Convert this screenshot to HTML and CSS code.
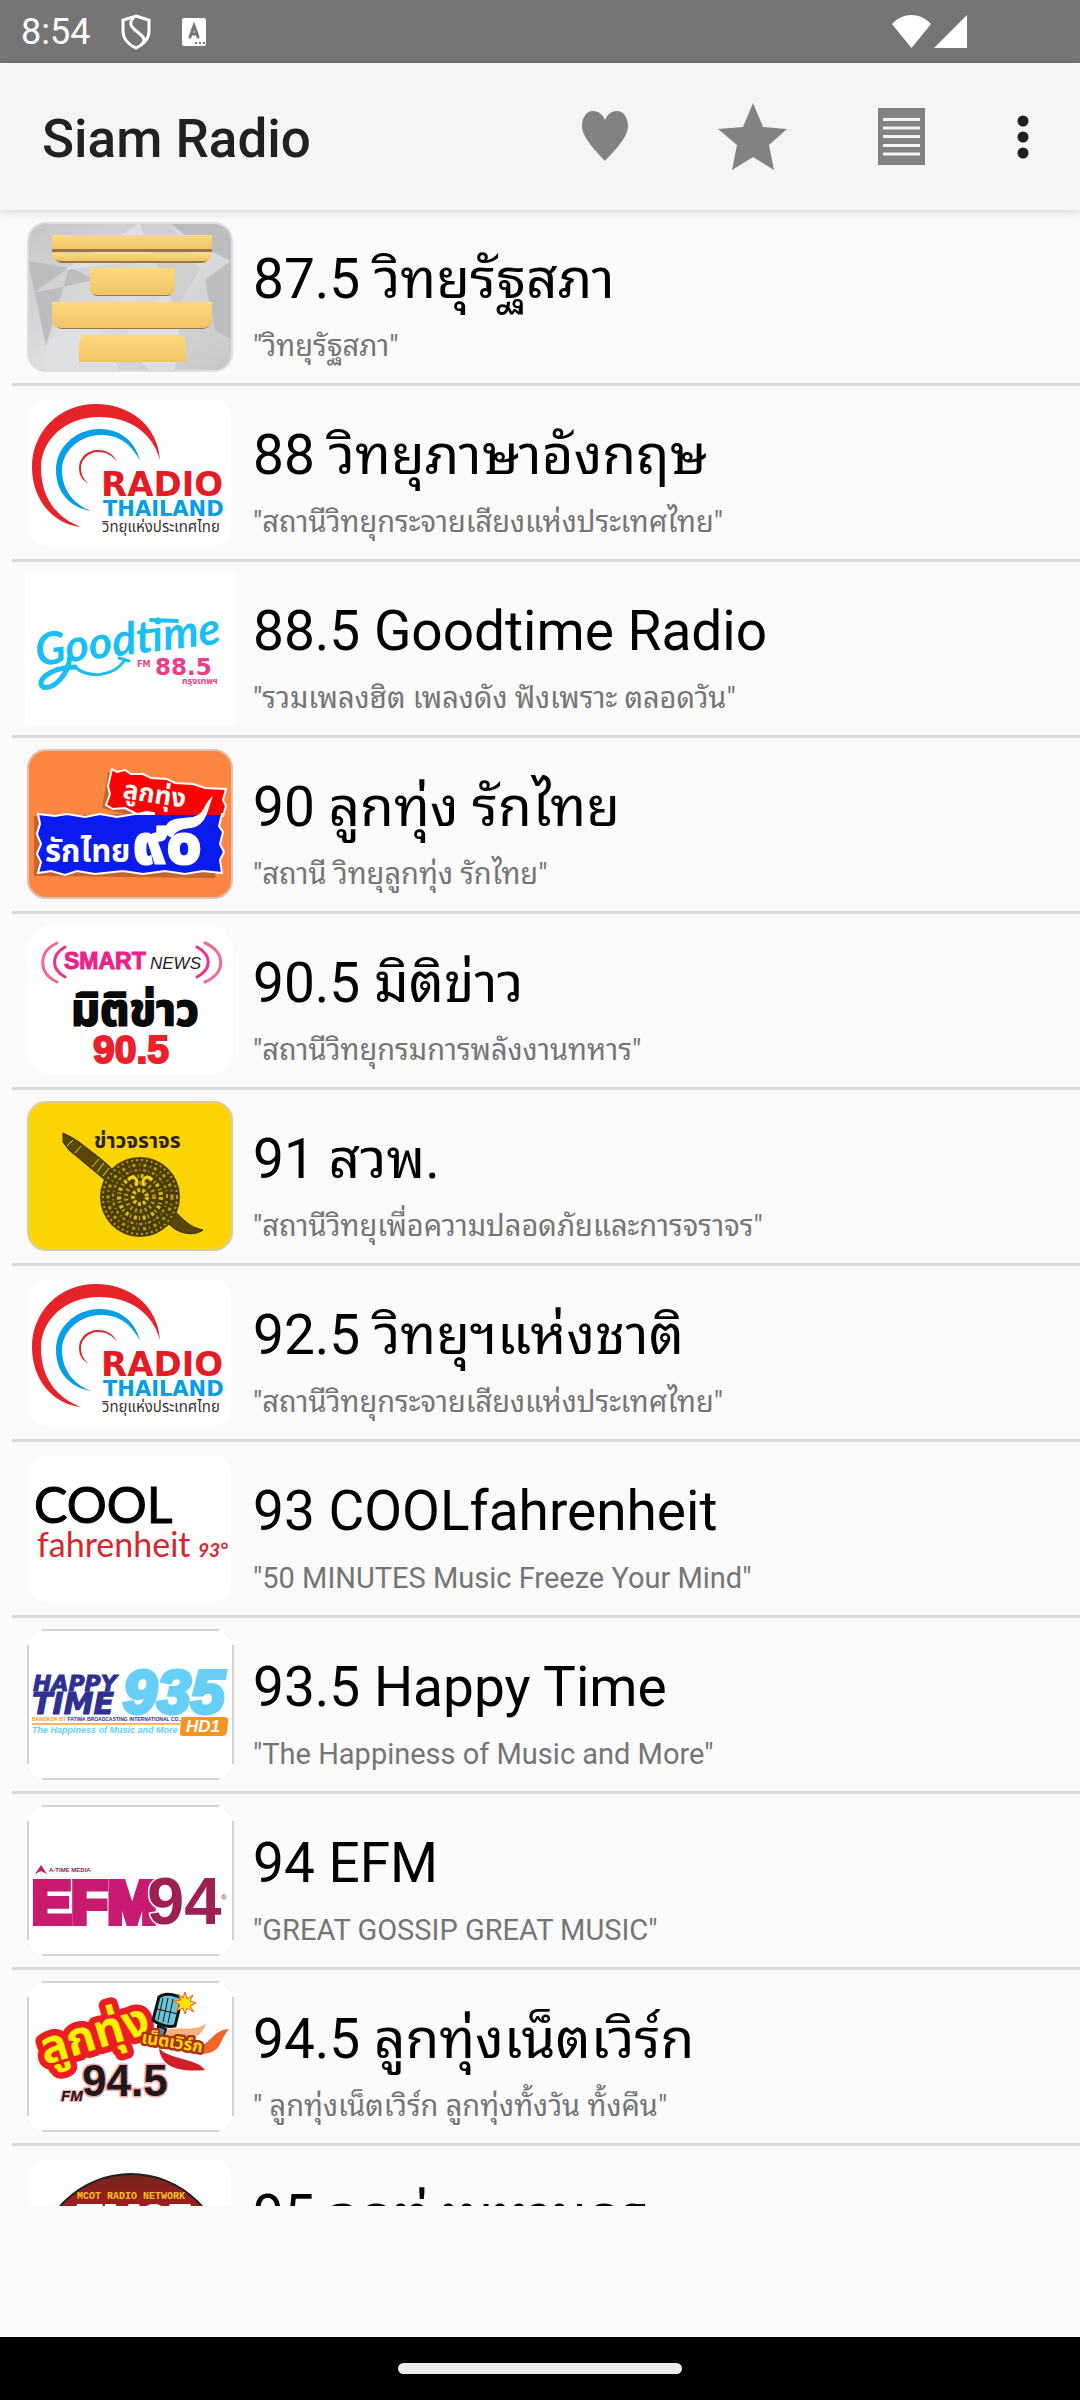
FILE: index.html
```html
<!DOCTYPE html>
<html lang="th">
<head>
  <meta charset="utf-8">
  <title>Siam Radio</title>
  <meta name="viewport" content="width=device-width, initial-scale=1.0">
  <link rel="stylesheet" href="styles.css">
</head>
<body>
  <div class="status-bar">
    <span class="clock">8:54</span>
    <svg class="status-icon" width="30" height="36" viewBox="0 0 30 36" fill="none" stroke="#fff" stroke-width="3">
      <path d="M15 2 L28 6 V17 C28 25 22 31 15 34 C8 31 2 25 2 17 V6 Z"/>
      <path d="M13 3 C8 8 9 12 14 16 L20 21 C25 25 23 28 20 31"/>
    </svg>
    <svg class="status-icon" width="24" height="28" viewBox="0 0 24 28">
      <rect width="24" height="28" rx="2" fill="#fff"/>
      <path d="M8 19 L12 8 L16 19 M9 16 H15" fill="none" stroke="#757575" stroke-width="3" stroke-linecap="round"/>
      <path d="M13 24h2v2h-2z M17 24h2v2h-2z M21 24h2v2h-2z" fill="#757575"/>
    </svg>
    <svg class="signal" width="76" height="34" viewBox="0 0 76 34" fill="#fff">
      <path d="M0 9 C11 -3 28 -3 39 9 L19.500 33 Z"/>
      <path d="M75 0 V33 H42 Z"/>
    </svg>
  </div>

  <header class="app-bar">
    <h1>Siam Radio</h1>
    <button class="action" aria-label="Favorites">
      <svg width="96" height="96" viewBox="0 0 96 96">
        <path fill="#828282" d="M48 72 C40 63 25 49 25 37 C25 28 30 22 36 22 C42 22 46 26 48 31 C50 26 54 22 60 22 C66 22 71 28 71 37 C71 49 56 63 48 72 Z"/>
      </svg>
    </button>
    <button class="action" aria-label="Top stations">
      <svg width="96" height="96" viewBox="0 0 96 96">
        <path fill="#828282" d="M48 14 L58 38 L82 40 L64 56 L69 81 L48 68 L27 81 L32 56 L13 40 L38 38 Z"/>
      </svg>
    </button>
    <button class="action" aria-label="Station list">
      <svg width="96" height="96" viewBox="0 0 96 96">
        <rect x="25" y="19" width="47" height="57" fill="#828282"/>
        <path d="M30 30.500H67 M30 39H67 M30 47.500H67 M30 56.500H67 M30 65H67" stroke="#f5f5f5" stroke-width="3"/>
      </svg>
    </button>
    <button class="action more" aria-label="More options">
      <svg width="24" height="48" viewBox="0 0 24 48" fill="#212121">
        <circle cx="12" cy="8" r="5.500"/>
        <circle cx="12" cy="24" r="5.500"/>
        <circle cx="12" cy="40" r="5.500"/>
      </svg>
    </button>
  </header>

  <main class="content">
    <ul class="stations">
      <li>
        <a class="station" href="#875">
          <svg class="logo" viewBox="0 0 210 153">
            <defs>
              <linearGradient id="steel" x1="0" y1="0" x2="1" y2="1">
                <stop offset="0" stop-color="#c3c4c6"/>
                <stop offset=".5" stop-color="#dcdddf"/>
                <stop offset="1" stop-color="#c4c5c7"/>
              </linearGradient>
              <linearGradient id="gold" x1="0" y1="0" x2="0" y2="1">
                <stop offset="0" stop-color="#ffda7b"/>
                <stop offset="1" stop-color="#efc465"/>
              </linearGradient>
              <clipPath id="plate"><rect x="3" y="3" width="204" height="148" rx="18"/></clipPath>
            </defs>
            <g clip-path="url(#plate)">
              <rect width="210" height="153" fill="url(#steel)"/>
              <path d="M3 41 L44 48 L21 126 Z M8 73 L70 60 L45 47 Z M145 3 H207 V42 L166 20 Z M180 60 L207 40 V120 L190 110 Z" fill="#bcbdbf"/>
              <path d="M40 50 L115 3 L125 40 Z M95 120 L160 50 L150 151 H125 Z M21 126 L60 80 L95 151 H20 Z" fill="#dedfe1"/>
              <path d="M115 3 L145 3 L175 50 L150 90 Z" fill="#cecfd1"/>
            </g>
            <rect x="3" y="3" width="204" height="148" rx="18" fill="none" stroke="#dedede" stroke-width="2"/>
            <g fill="#a07440">
              <rect x="27" y="29" width="160" height="3"/>
              <path d="M29 36 H185 Q182 43 177 43 H37 Q31 43 29 36Z"/>
              <path d="M66 66 H149 Q148 76 142 76 H72 Q66 76 66 66Z"/>
              <path d="M28 98 H187 Q186 109 178 109 H37 Q28 109 28 98Z"/>
            </g>
            <g fill="url(#gold)">
              <rect x="27" y="15" width="160" height="14"/>
              <path d="M27 33 H187 Q187 41 179 41 H36 Q27 41 27 33Z"/>
              <path d="M65 48 H150 V67 Q150 75 143 75 H72 Q65 75 65 67Z"/>
              <path d="M27 82 H187 V99 Q187 108 178 108 H36 Q27 108 27 99Z"/>
              <path d="M54 142 V124 Q54 115 63 115 H152 Q161 115 161 124 V142Z"/>
            </g>
          </svg>
          <span class="info">
            <span class="name">87.5 วิทยุรัฐสภา</span>
            <span class="desc">"วิทยุรัฐสภา"</span>
          </span>
        </a>
      </li>
      <li>
        <a class="station" href="#88">
          <svg class="logo" viewBox="0 0 210 153">
            <rect x="4" y="4" width="202" height="145" rx="15" fill="#fff"/>
            <path fill="#e52329" d="M135 64 C133 30 105 8 71 8 C34 8 7 36 7 71 C7 104 28 128 56 131 C32 122 16 102 16 72 C16 44 40 21 74 21 C106 21 128 38 135 64Z"/>
            <path fill="#009fe8" d="M115 65 C110 44 94 33 75 33 C50 33 31 52 31 74 C31 98 47 112 66 115 C50 109 37 95 37 74 C37 55 55 39 76 39 C95 39 107 49 115 65Z"/>
            <path fill="#e52329" d="M92 66 C88 57 81 54 73 54 C62 54 54 62 54 72 C54 80 58 85 64 88 C59 84 56 79 56 72 C56 63 64 56 73 56 C81 56 87 59 92 66Z"/>
            <text class="wide bold" x="76" y="100" font-size="34" fill="#e31b23">RADIO</text>
            <text class="wide bold" x="78" y="120" font-size="21" fill="#009fe8">THAILAND</text>
            <text class="thai" x="77" y="136" font-size="15" fill="#3a2f30">วิทยุแห่งประเทศไทย</text>
          </svg>
          <span class="info">
            <span class="name">88 วิทยุภาษาอังกฤษ</span>
            <span class="desc">"สถานีวิทยุกระจายเสียงแห่งประเทศไทย"</span>
          </span>
        </a>
      </li>
      <li>
        <a class="station" href="#885">
          <svg class="logo" viewBox="0 0 210 153">
            <rect width="210" height="153" fill="#fff"/>
            <text class="script" x="12" y="94" font-size="45" fill="#19bff3" transform="rotate(-7 12 94)">Goodtime</text>
            <g fill="none" stroke="#19bff3" stroke-linecap="round">
              <path d="M50 95 C64 107 88 105 100 88" stroke-width="3"/>
              <path d="M94 86 L104 89" stroke-width="3"/>
              <path d="M45 84 C44 102 29 118 18 115 C11 110 22 96 50 95" stroke-width="5"/>
              <path d="M126 48 L152 49" stroke-width="4"/>
            </g>
            <text class="wide bold" x="112" y="95" font-size="8" fill="#ee3d86">FM</text>
            <text class="wide bold" x="130" y="103" font-size="23" fill="#ee3d86">88.5</text>
            <text class="thai bold" x="157" y="112" font-size="9" fill="#ee3d86">กรุงเทพฯ</text>
          </svg>
          <span class="info">
            <span class="name">88.5 Goodtime Radio</span>
            <span class="desc">"รวมเพลงฮิต เพลงดัง ฟังเพราะ ตลอดวัน"</span>
          </span>
        </a>
      </li>
      <li>
        <a class="station" href="#90">
          <svg class="logo" viewBox="0 0 210 153">
            <rect x="3" y="2" width="204" height="148" rx="18" fill="#ff8640" stroke="#d8c3b6" stroke-width="2"/>
            <path d="M83 24 L77 60 L100 66 L9 68 V128 L190 130 L197 80Z" fill="#7d3d18" opacity=".45"/>
            <path fill="#f00" stroke="#fff" stroke-width="2" d="M87 21 L92 24 L100 22 L106 26 L118 26 L126 30 L142 31 L150 35 L168 36 L180 40 L201 41 L198 52 L201 58 L198 68 L140 67 L122 64 L112 66 L100 60 L88 61 L81 57 L85 46 L83 38 Z"/>
            <path fill="#0a1bf0" stroke="#fff" stroke-width="2" d="M13 66 L30 68 L42 66 L60 69 L75 66 L92 69 L110 66 H197 L194 78 L198 84 L195 96 L199 104 L195 112 L197 125 L178 123 L160 126 L140 123 L118 126 L98 123 L70 126 L52 123 L40 127 L26 123 L13 125 L16 114 L12 106 L16 96 L12 86 L15 76 Z"/>
            <path fill="#f00" d="M130 62 H196 V67 H130Z"/>
            <path fill="#fff" d="M140 86 C139 68 155 71 168 69 C180 66 178 56 188 48 C183 60 182 78 166 80 C154 81 150 84 147 90Z"/>
            <text class="thai bold" x="97" y="50" font-size="26" fill="#fff" transform="rotate(9 97 50)">ลูกทุ่ง</text>
            <text class="thai bold" x="20" y="114" font-size="31" fill="#fff">รักไทย</text>
            <text class="thai bold" x="108" y="115" font-size="62" fill="#fff" stroke="#fff" stroke-width="3">๙๐</text>
          </svg>
          <span class="info">
            <span class="name">90 ลูกทุ่ง รักไทย</span>
            <span class="desc">"สถานี วิทยุลูกทุ่ง รักไทย"</span>
          </span>
        </a>
      </li>
      <li>
        <a class="station" href="#905">
          <svg class="logo" viewBox="0 0 210 153">
            <rect x="2" y="2" width="206" height="149" rx="25" fill="#fff"/>
            <g fill="none" stroke-width="3" stroke-linecap="round">
              <path d="M32 19 C13 28 13 49 32 58 M180 19 C201 28 201 49 180 58" stroke="#ee6a92"/>
              <path d="M40 23 C26 31 26 45 40 53 M172 23 C187 31 187 45 172 53" stroke="#ec2f92"/>
            </g>
            <text class="sans bold" x="39" y="45" font-size="23" fill="#ec1f8c" stroke="#ec1f8c">SMART</text>
            <text class="sans italic" x="125" y="45" font-size="17" fill="#222">NEWS</text>
            <text class="thai bold" x="46" y="101" font-size="45" fill="#0a0a0a" stroke="#0a0a0a" stroke-width="2">มิติข่าว</text>
            <text class="sans bold" x="68" y="139" font-size="39" fill="#ea202d" stroke="#ea202d" stroke-width="2">90.5</text>
          </svg>
          <span class="info">
            <span class="name">90.5 มิติข่าว</span>
            <span class="desc">"สถานีวิทยุกรมการพลังงานทหาร"</span>
          </span>
        </a>
      </li>
      <li>
        <a class="station" href="#91">
          <svg class="logo" viewBox="0 0 210 153">
            <rect x="3" y="2" width="204" height="148" rx="18" fill="#fcd404" stroke="#d6cfa6" stroke-width="2"/>
            <text class="thai bold" x="69" y="48" font-size="21" fill="#2b2300">ข่าวจราจร</text>
            <path fill="#574806" stroke="#2f2600" d="M38 33 L46 37 L54 42 L76 59 L84 66 L90 73 L80 80 L68 70 L44 50 L38 42Z"/>
            <path d="M48 40 L42 46 M56 46 L50 53 M74 59 L67 67 M79 63 L72 72 M84 68 L78 76" stroke="#fcd404"/>
            <path fill="#574806" stroke="#2f2600" d="M150 112 C158 118 163 127 178 130 C170 136 154 135 144 124Z"/>
            <circle cx="115" cy="97" r="40" fill="#4c3e02"/>
            <g fill="none" stroke="#b99c0c">
              <circle cx="115" cy="97" r="37" stroke-width="2" stroke-dasharray="2 3"/>
              <circle cx="115" cy="97" r="32" stroke-width="3" stroke-dasharray="3 4 1 3"/>
              <circle cx="115" cy="97" r="27" stroke-width="2" stroke-dasharray="1 3 3 2"/>
              <circle cx="115" cy="97" r="21" stroke="#dfbc08" stroke-width="4" stroke-dasharray="3 3 1 2"/>
              <circle cx="115" cy="97" r="14" stroke-width="4" stroke-dasharray="2 3"/>
              <circle cx="115" cy="97" r="7" stroke="#dfbc08" stroke-width="4" stroke-dasharray="3 2"/>
              <path d="M103 80 C108 74 114 79 111 86 M127 80 C122 74 116 79 119 86" stroke="#fcd404" stroke-width="3"/>
            </g>
          </svg>
          <span class="info">
            <span class="name">91 สวพ.</span>
            <span class="desc">"สถานีวิทยุเพื่อความปลอดภัยและการจราจร"</span>
          </span>
        </a>
      </li>
      <li>
        <a class="station" href="#925">
          <svg class="logo" viewBox="0 0 210 153">
            <rect x="4" y="4" width="202" height="145" rx="15" fill="#fff"/>
            <path fill="#e52329" d="M135 64 C133 30 105 8 71 8 C34 8 7 36 7 71 C7 104 28 128 56 131 C32 122 16 102 16 72 C16 44 40 21 74 21 C106 21 128 38 135 64Z"/>
            <path fill="#009fe8" d="M115 65 C110 44 94 33 75 33 C50 33 31 52 31 74 C31 98 47 112 66 115 C50 109 37 95 37 74 C37 55 55 39 76 39 C95 39 107 49 115 65Z"/>
            <path fill="#e52329" d="M92 66 C88 57 81 54 73 54 C62 54 54 62 54 72 C54 80 58 85 64 88 C59 84 56 79 56 72 C56 63 64 56 73 56 C81 56 87 59 92 66Z"/>
            <text class="wide bold" x="76" y="100" font-size="34" fill="#e31b23">RADIO</text>
            <text class="wide bold" x="78" y="120" font-size="21" fill="#009fe8">THAILAND</text>
            <text class="thai" x="77" y="136" font-size="15" fill="#3a2f30">วิทยุแห่งประเทศไทย</text>
          </svg>
          <span class="info">
            <span class="name">92.5 วิทยุฯแห่งชาติ</span>
            <span class="desc">"สถานีวิทยุกระจายเสียงแห่งประเทศไทย"</span>
          </span>
        </a>
      </li>
      <li>
        <a class="station" href="#93">
          <svg class="logo" viewBox="0 0 210 153">
            <rect x="4" y="4" width="202" height="145" rx="15" fill="#fff"/>
            <text class="lato" x="9" y="71" font-size="50" fill="#000" stroke="#000">COOL</text>
            <text class="lato" x="12" y="105" font-size="34" fill="#d7262c">fahrenheit</text>
            <text class="lato italic bold" x="173" y="105" font-size="19" fill="#d7262c">93°</text>
          </svg>
          <span class="info">
            <span class="name">93 COOLfahrenheit</span>
            <span class="desc">"50 MINUTES Music Freeze Your Mind"</span>
          </span>
        </a>
      </li>
      <li>
        <a class="station" href="#935">
          <svg class="logo" viewBox="0 0 210 153">
            <rect x="3" y="3" width="204" height="148" rx="18" fill="#fff"/>
            <path d="M17 2H194 M17 151H194 M3 17V136 M208 17V136" stroke="#d4d4d4" stroke-width="2"/>
            <text class="sans bold italic" x="98" y="85" font-size="61" fill="#67cff7" stroke="#67cff7" stroke-width="4">935</text>
            <text class="wide bold italic" x="8" y="63" font-size="22" fill="#2e3192" stroke="#2e3192">HAPPY</text>
            <text class="wide bold italic" x="7" y="86" font-size="30" fill="#2e3192" stroke="#2e3192">TIME</text>
            <text class="sans bold" x="7" y="93" font-size="5" fill="#2e3192"><tspan fill="#f7941e">BANGKOK BY</tspan> FATIMA BROADCASTING INTERNATIONAL CO.,LTD.</text>
            <path d="M7 96H155" stroke="#f7b565" stroke-width="2"/>
            <text class="sans bold italic" x="7" y="105" font-size="9" fill="#67cff7">The Happiness of Music and More</text>
            <path d="M160 89 H199 Q204 89 203 94 L202 104 Q201 108 197 108 H158 Q154 108 155 104 L156 93 Q157 89 160 89Z" fill="#f7941e"/>
            <text class="sans bold italic" x="161" y="104" font-size="17" fill="#fff">HD1</text>
          </svg>
          <span class="info">
            <span class="name">93.5 Happy Time</span>
            <span class="desc">"The Happiness of Music and More"</span>
          </span>
        </a>
      </li>
      <li>
        <a class="station" href="#94">
          <svg class="logo" viewBox="0 0 210 153">
            <rect x="3" y="3" width="204" height="148" rx="18" fill="#fff"/>
            <path d="M17 2H194 M17 151H194 M3 17V136 M208 17V136" stroke="#d4d4d4" stroke-width="2"/>
            <path d="M16 61 L22 70 L16 67 L10 70Z" fill="#c51c5c"/>
            <text class="sans bold" x="24" y="68" font-size="6" fill="#8d1c4c">A-TIME MEDIA</text>
            <text class="sans bold" x="7" y="119" font-size="59" fill="#c81a70" stroke="#c81a70" stroke-width="6">EFM</text>
            <text class="sans bold halo" x="122" y="120" font-size="67" fill="#9e1f53" stroke="#fff" stroke-width="3">94</text>
            <text class="sans" x="196" y="96" font-size="8" fill="#9e1f53">®</text>
          </svg>
          <span class="info">
            <span class="name">94 EFM</span>
            <span class="desc">"GREAT GOSSIP GREAT MUSIC"</span>
          </span>
        </a>
      </li>
      <li>
        <a class="station" href="#945">
          <svg class="logo" viewBox="0 0 210 153">
            <rect x="3" y="3" width="204" height="148" rx="18" fill="#fff"/>
            <path d="M17 2H194 M17 151H194 M3 17V136 M208 17V136" stroke="#d4d4d4" stroke-width="2"/>
            <path d="M136 50 C160 46 172 52 181 43 C178 56 165 62 150 62Z" fill="#f7b27c"/>
            <path d="M165 70 C185 68 186 50 204 49 C194 60 198 72 178 74Z" fill="#f1652a"/>
            <path d="M134 68 C144 80 172 78 180 90 C160 92 136 90 134 68Z" fill="#cf2027"/>
            <text class="thai bold halo" x="20" y="85" font-size="46" fill="#fff200" stroke="#ec1c24" stroke-width="13" transform="rotate(-17 20 85)">ลูกทุ่ง</text>
            <path d="M133 46 L141 49 L138 58 H133Z" fill="#4a8fa0" stroke="#111" stroke-width="2"/>
            <path d="M134 17 Q142 11 157 18 L150 46 Q138 48 128 40Z" fill="#6cc5d6" stroke="#111" stroke-width="3"/>
            <path d="M138 18 L133 40 M143 18 L138 42 M148 19 L143 43 M132 29 L153 34" stroke="#111"/>
            <path d="M160 12 L162 19 L168 15 L165 21 L171 23 L165 26 L169 32 L162 28 L160 34 L158 28 L151 31 L155 25 L149 21 L156 20 L153 14 L158 18Z" fill="#ffe600" stroke="#f15a22"/>
            <text class="thai bold halo" x="116" y="63" font-size="17" fill="#ffd800" stroke="#a8321c" stroke-width="5" transform="rotate(9 116 63)">เน็ตเวิร์ก</text>
            <text class="sans bold halo" x="57" y="116" font-size="44" fill="#1c191a" stroke="#f5a3a3" stroke-width="3">94.5</text>
            <text class="sans bold italic halo" x="36" y="121" font-size="15" fill="#1c191a" stroke="#f5a3a3" stroke-width="2">FM</text>
          </svg>
          <span class="info">
            <span class="name">94.5 ลูกทุ่งเน็ตเวิร์ก</span>
            <span class="desc">" ลูกทุ่งเน็ตเวิร์ก ลูกทุ่งทั้งวัน ทั้งคืน"</span>
          </span>
        </a>
      </li>
      <li>
        <a class="station" href="#95">
          <svg class="logo" viewBox="0 0 210 153">
            <defs>
              <linearGradient id="maroon" x1="0" y1="0" x2="0" y2="1">
                <stop offset="0" stop-color="#74251f"/>
                <stop offset=".2" stop-color="#a51c1c"/>
              </linearGradient>
              <clipPath id="card"><rect x="4" y="4" width="202" height="145" rx="15"/></clipPath>
            </defs>
            <rect x="4" y="4" width="202" height="145" rx="15" fill="#fff"/>
            <circle cx="106" cy="112" r="94" fill="url(#maroon)" stroke="#222" stroke-width="2" clip-path="url(#card)"/>
            <text class="mono bold" x="52" y="43" font-size="10" fill="#f9c21b">MCOT RADIO NETWORK</text>
            <text class="sans bold" x="50" y="81" font-size="46" fill="#fff" stroke="#fff" stroke-width="2">FM95</text>
          </svg>
          <span class="info">
            <span class="name">95 ลูกทุ่งมหานคร</span>
            <span class="desc">"ลูกทุ่งมหานคร"</span>
          </span>
        </a>
      </li>
    </ul>
  </main>

  <div class="player-slot"></div>
  <div class="nav-bar"><span class="home-pill"></span></div>
</body>
</html>
```

FILE: styles.css
```css
* { box-sizing: border-box; }
body { display: flex; flex-direction: column; height: 100vh; margin: 0; background: #fafafa; color: #000; font-family: Roboto, "Noto Sans Thai Looped", "Noto Looped Thai", "Noto Sans Thai", "Noto Sans", sans-serif; }

.status-bar { display: flex; flex: none; align-items: center; height: 63px; padding: 0 112px 0 21px; background: #757575; color: #fff; }
.clock { margin-right: 31px; font-size: 36px; line-height: 40px; }
.status-icon { margin-right: 31px; }
.signal { margin-left: auto; }

.app-bar { position: relative; z-index: 1; display: flex; flex: none; align-items: center; height: 147px; padding: 0 10px 0 42px; background: #f5f5f5; box-shadow: 0 2px 10px rgba(0, 0, 0, 0.15); }
.app-bar h1 { flex: 1; margin: 0; padding-top: 4px; color: #212121; font-size: 53px; font-weight: 500; line-height: 64px; }
.action { display: flex; align-items: center; justify-content: center; width: 148px; height: 100%; padding: 0; border: none; background: none; cursor: pointer; }
.action.more { width: 95px; }

.content { flex: 1; min-height: 0; overflow-y: auto; scrollbar-width: none; }
.stations { margin: 0; padding: 0 0 0 12px; list-style: none; }
.stations li { border-bottom: 3px solid #dadada; }
.station { display: flex; gap: 18px; height: 173px; padding: 10px 13px; color: inherit; text-decoration: none; }
.logo { flex: none; width: 210px; height: 153px; }
.info { display: flex; flex: 1; flex-direction: column; gap: 18px; min-width: 0; padding-top: 26px; white-space: nowrap; }
.name { font-size: 55px; line-height: 66px; }
.desc { color: #757575; font-size: 29px; line-height: 32px; }

/* lettering inside the station logos */
.sans { font-family: "Liberation Sans", sans-serif; }
.wide { font-family: "DejaVu Sans", sans-serif; }
.lato { font-family: Lato, sans-serif; }
.mono { font-family: "Liberation Mono", monospace; }
.thai { font-family: "Noto Sans Thai", "Noto Sans", sans-serif; }
.script { font-family: Lato, sans-serif; font-style: italic; font-weight: 700; }
.bold { font-weight: 700; }
.italic { font-style: italic; }
.halo { paint-order: stroke; stroke-linejoin: round; }

.player-slot { flex: none; height: 131px; }
.nav-bar { display: flex; flex: none; align-items: center; justify-content: center; height: 63px; background: #000; }
.home-pill { width: 284px; height: 11px; border-radius: 6px; background: #ebebeb; }
```
